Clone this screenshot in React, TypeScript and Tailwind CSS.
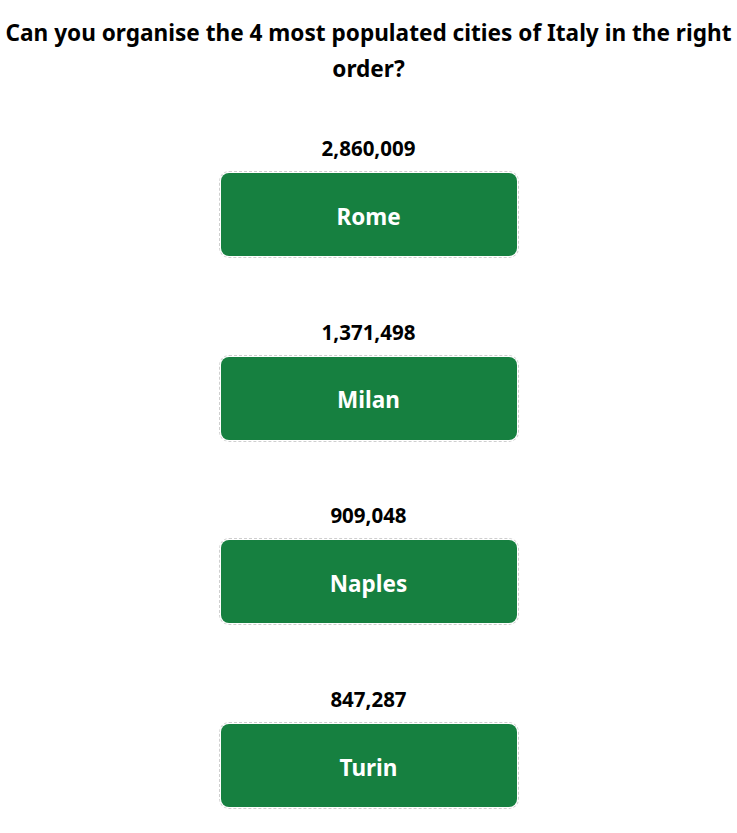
const cities = [
  { name: "Rome", population: "2,860,009" },
  { name: "Milan", population: "1,371,498" },
  { name: "Naples", population: "909,048" },
  { name: "Turin", population: "847,287" },
];

export default function App() {
  return (
    <div className="min-h-screen bg-white text-black pt-[15px] font-['Noto_Sans','Open_Sans',sans-serif]">
      <h1 className="text-center text-[22.6px] font-bold leading-[36px] px-1">
        Can you organise the 4 most populated cities of Italy in the right order?
      </h1>
      <div className="mt-[47px] flex flex-col items-center gap-[59.7px]">
        {cities.map((c) => (
          <div key={c.name} className="flex flex-col items-center">
            <div className="text-[20.5px] font-bold leading-[28px]">{c.population}</div>
            <div className="mt-[9px] w-[300px] rounded-[10px] border border-dashed border-[#cfcfcf] p-[1px]">
              <div className="flex h-[83px] items-center justify-center rounded-[8px] bg-[#168040] pt-[4px] text-[22.5px] font-bold text-white">
                {c.name}
              </div>
            </div>
          </div>
        ))}
      </div>
    </div>
  );
}
